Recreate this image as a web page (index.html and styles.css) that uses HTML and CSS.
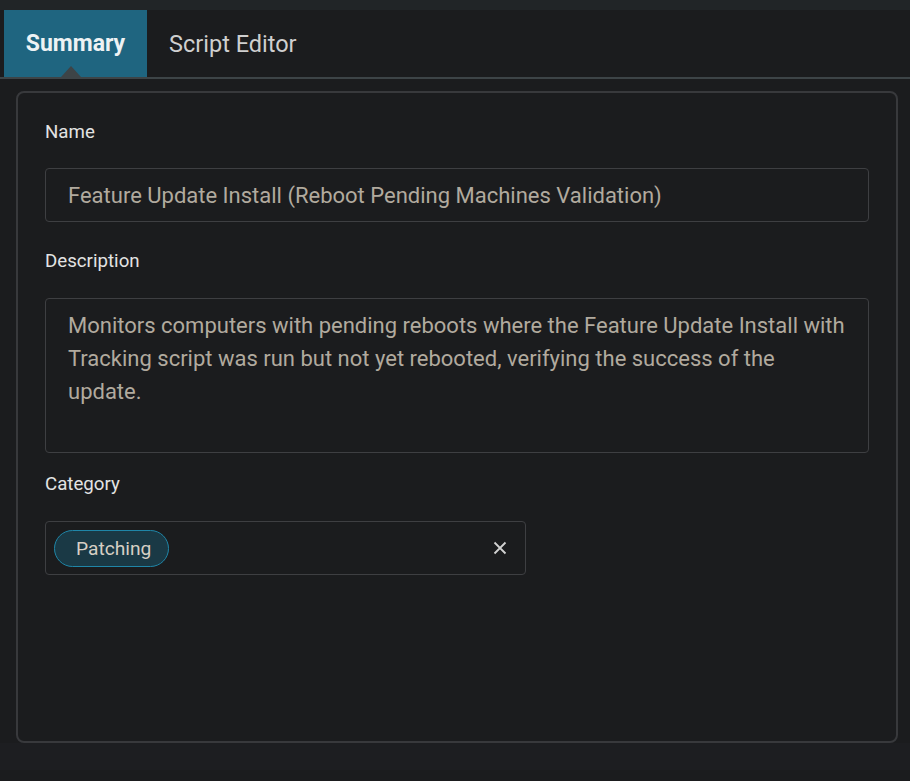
FILE: index.html
```html
<!DOCTYPE html>
<html lang="en">
<head>
<meta charset="utf-8">
<title>Summary</title>
<link rel="stylesheet" href="styles.css">
</head>
<body>
<div class="topstrip"></div>
<div class="tabs">
  <div class="tab active">Summary<span class="caret"></span></div>
  <div class="tab">Script Editor</div>
</div>
<div class="content">
  <div class="panel">
    <div class="field">
      <div class="label">Name</div>
      <div class="input">Feature Update Install (Reboot Pending Machines Validation)</div>
    </div>
    <div class="field">
      <div class="label">Description</div>
      <div class="textarea">Monitors computers with pending reboots where the Feature Update Install with Tracking script was run but not yet rebooted, verifying the success of the update.</div>
    </div>
    <div class="field">
      <div class="label">Category</div>
      <div class="select">
        <span class="chip">Patching</span>
        <svg class="clear" width="14" height="14" viewBox="0 0 14 14"><path d="M1.5 1.5 L12.5 12.5 M12.5 1.5 L1.5 12.5" stroke="#d2d2d2" stroke-width="1.8" fill="none"/></svg>
      </div>
    </div>
  </div>
</div>
<div class="bottomstrip"></div>
</body>
</html>
```
FILE: styles.css
```css
html, body {
  margin: 0;
  padding: 0;
}
body {
  width: 910px;
  height: 781px;
  overflow: hidden;
  background: #1b1c1e;
  font-family: Roboto, "Liberation Sans", sans-serif;
}
.topstrip {
  height: 10px;
  background: #212527;
}
.tabs {
  display: flex;
  height: 67px;
  border-bottom: 2px solid #3d4447;
  padding-left: 4px;
}
.tab {
  position: relative;
  display: flex;
  align-items: center;
  padding: 0 22px;
  font-size: 23.5px;
  color: #cfcfcf;
}
.tab.active {
  width: 143px;
  box-sizing: border-box;
  justify-content: center;
  background: #1f6580;
  color: #eef2f4;
  font-weight: 700;
  font-size: 23px;
  padding: 0;
}
.caret {
  position: absolute;
  left: 57px;
  bottom: 0;
  width: 0;
  height: 0;
  border-left: 10px solid transparent;
  border-right: 10px solid transparent;
  border-bottom: 11px solid #3d4447;
}
.content {
  padding: 12px 12px 0 16px;
  height: 664px;
  box-sizing: border-box;
}
.panel {
  height: 652px;
  box-sizing: border-box;
  border: 2px solid #38393c;
  border-radius: 8px;
  padding: 28px 27px 0 27px;
}
.field {
  display: flex;
  flex-direction: column;
}
.label {
  font-size: 18.7px;
  line-height: 22px;
  color: #e3e3e3;
}
.input, .textarea, .select {
  border: 1px solid #3e3f42;
  border-radius: 4px;
  box-sizing: border-box;
  color: #b1aa9e;
  font-size: 22px;
}
.input {
  margin-top: 25px;
  height: 54px;
  display: flex;
  align-items: center;
  padding: 0 22px;
  margin-bottom: 28px;
}
.textarea {
  margin-top: 26px;
  height: 155px;
  padding: 10px 22px 0 22px;
  line-height: 33px;
  margin-bottom: 20px;
}
.select {
  margin-top: 26px;
  width: 481px;
  height: 54px;
  display: flex;
  align-items: center;
  justify-content: space-between;
  padding: 0 18px 0 8px;
}
.chip {
  display: flex;
  align-items: center;
  height: 37px;
  box-sizing: border-box;
  padding: 0 17px 0 21px;
  border: 1px solid #1f86a8;
  border-radius: 19px;
  background: #1a3945;
  color: #d6cfc4;
  font-size: 19.2px;
}
.clear {
  display: block;
}
.bottomstrip {
  height: 27px;
  background: #1d1e21;
}
```
